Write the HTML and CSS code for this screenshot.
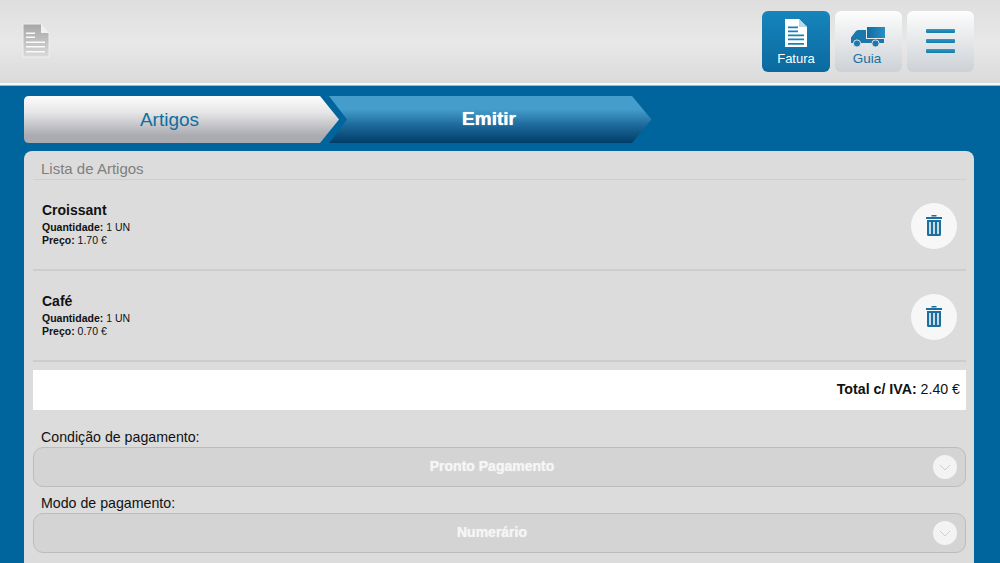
FILE: index.html
```html
<!DOCTYPE html>
<html lang="pt">
<head>
<meta charset="utf-8">
<title>Emitir</title>
<link rel="stylesheet" href="styles.css">
</head>
<body>
<header class="topbar">
  <svg class="logo" width="28" height="36" viewBox="0 0 28 36">
    <defs><linearGradient id="lg" x1="0" y1="0" x2="0" y2="1"><stop offset="0" stop-color="#a6a6a6"/><stop offset="1" stop-color="#dadada"/></linearGradient></defs>
    <path d="M1 1H19L27 10V34H1Z" fill="url(#lg)" stroke="#efefef" stroke-width="1"/>
    <path d="M19 1L27 10H19Z" fill="#f1f1f1"/>
    <path d="M4 9.500H13V11H4ZM4 13.500H13V15H4ZM4 18.500H23V20H4ZM4 23H23V24.500H4ZM4 28H23V29.500H4Z" fill="#fafafa"/>
  </svg>
  <nav class="actions">
    <button class="action active">
      <svg width="24" height="29" viewBox="0 0 24 29"><path d="M1 0H15L23 8V28H1Z" fill="#fff"/><path d="M15 0L23 8H15Z" fill="#bcd9ea"/><path d="M4 7.500H14V9.300H4ZM4 11.500H14V13.300H4ZM4 15.500H20V17.300H4ZM4 19.500H20V21.300H4ZM4 24H20V25.800H4Z" fill="#1a81b5"/></svg>
      <span>Fatura</span>
    </button>
    <button class="action guia">
      <svg width="37" height="21" viewBox="0 0 37 21"><defs><linearGradient id="tg" x1="0" y1="0" x2="1" y2="0"><stop offset="0" stop-color="#0f6da3"/><stop offset="1" stop-color="#2a8fc2"/></linearGradient></defs><path d="M18 0H36V11H18Z" fill="url(#tg)"/><path d="M2 16V10.500L7 4Q8 3 10 3H17V12H35V16Z" fill="#1a78ad"/><circle cx="8" cy="16.500" r="3.600" fill="#1a78ad" stroke="#dfe2e6" stroke-width="1"/><circle cx="26.500" cy="16.500" r="3.600" fill="#1a78ad" stroke="#dfe2e6" stroke-width="1"/></svg>
      <span class="dark">Guia</span>
    </button>
    <button class="action menu" aria-label="Menu">
      <i class="bar"></i><i class="bar"></i><i class="bar"></i>
    </button>
  </nav>
</header>
<main class="content">
  <div class="steps">
    <div class="step first">Artigos</div>
    <div class="step second">Emitir</div>
  </div>
  <section class="panel">
    <h2 class="title">Lista de Artigos</h2>
    <article class="item">
      <div class="info">
        <h3>Croissant</h3>
        <p><b>Quantidade:</b> 1 UN</p>
        <p><b>Preço:</b> 1.70 €</p>
      </div>
      <button class="trash" aria-label="Apagar"><svg width="16" height="21" viewBox="0 0 16 21"><path d="M5.500 0H10.500V1.500H5.500ZM0 2H16V4H0ZM1 5H15V19.500Q15 21 13.500 21H2.500Q1 21 1 19.500ZM3.200 7V19H4.800V7ZM7.200 7V19H8.800V7ZM11.200 7V19H12.800V7Z" fill="#1a6f9f" fill-rule="evenodd"/></svg></button>
    </article>
    <article class="item">
      <div class="info">
        <h3>Café</h3>
        <p><b>Quantidade:</b> 1 UN</p>
        <p><b>Preço:</b> 0.70 €</p>
      </div>
      <button class="trash" aria-label="Apagar"><svg width="16" height="21" viewBox="0 0 16 21"><path d="M5.500 0H10.500V1.500H5.500ZM0 2H16V4H0ZM1 5H15V19.500Q15 21 13.500 21H2.500Q1 21 1 19.500ZM3.200 7V19H4.800V7ZM7.200 7V19H8.800V7ZM11.200 7V19H12.800V7Z" fill="#1a6f9f" fill-rule="evenodd"/></svg></button>
    </article>
    <div class="total"><b>Total c/ IVA:</b> 2.40 €</div>
    <label class="label first-label">Condição de pagamento:</label>
    <div class="select">
      <span>Pronto Pagamento</span>
      <i class="chev"><svg width="12" height="7" viewBox="0 0 12 7"><path d="M1 1L6 6L11 1" fill="none" stroke="#d0d0d0" stroke-width="1"/></svg></i>
    </div>
    <label class="label">Modo de pagamento:</label>
    <div class="select">
      <span>Numerário</span>
      <i class="chev"><svg width="12" height="7" viewBox="0 0 12 7"><path d="M1 1L6 6L11 1" fill="none" stroke="#d0d0d0" stroke-width="1"/></svg></i>
    </div>
  </section>
</main>
</body>
</html>
```
FILE: styles.css
```css
* { box-sizing: border-box; }
html, body { margin: 0; height: 563px; overflow: hidden; }
body { background: #00659c; font-family: "Liberation Sans", Arial, sans-serif; color: #111; }
h2, h3, p { margin: 0; font-weight: normal; }
button { font-family: inherit; border: 0; padding: 0; }

.topbar {
  height: 86px;
  padding: 11px 26px 0 22px;
  display: flex;
  justify-content: space-between;
  align-items: flex-start;
  background: linear-gradient(#dedede, #e8e8e8 50%, #dadada);
  border-bottom: 1px solid #b4b4b4;
  box-shadow: inset 0 -2px 0 #f8f8f8;
}
.logo { margin-top: 12px; }
.actions { display: flex; gap: 5px; }
.action {
  width: 67px;
  height: 61px;
  border-radius: 6px;
  display: flex;
  flex-direction: column;
  align-items: center;
  justify-content: flex-end;
  gap: 3px;
  padding-bottom: 6px;
  background: linear-gradient(#fdfdfd, #cdd1d6);
  font-size: 13px;
  color: #fff;
}
.action.active { width: 68px; background: linear-gradient(#1685bb, #0a6a9f); }
.action.guia { padding-right: 3px; font-size: 13.500px; }
.action .dark { color: #16719f; }
.action.menu { justify-content: center; gap: 5.500px; padding: 0 0 1px; }
.bar { display: block; width: 29px; height: 4.500px; background: linear-gradient(#2f9cc8, #137aa8); border-radius: 1px; }

.content { padding: 10px 26px 0 24px; }
.steps { display: flex; height: 47px; }
.step {
  height: 47px;
  display: flex;
  align-items: center;
  justify-content: center;
  font-size: 19px;
}
.step.first {
  width: 315px;
  padding-right: 24px;
  color: #0f6f9f;
  background: linear-gradient(#fdfdfd, #e6e6e8 35%, #a9abb0 85%, #a9abb0);
  clip-path: path("M5 0H296L315 23.500L296 47H5Q0 47 0 42V5Q0 0 5 0Z");
}
.step.second {
  width: 324px;
  margin-left: -11px;
  padding: 0 2px 2px 0;
  color: #fff;
  font-weight: bold;
  text-shadow: 0 0 1px #fff;
  background: linear-gradient(#459dcb, #459dcb 28%, #1d6a9b 62%, #003d69);
  clip-path: path("M1 0H304L323.500 23.500L304 47H1L19 23.500Z");
}

.panel {
  margin-top: 8px;
  height: 420px;
  padding: 9px 8px 0 9px;
  background: #dcdcdc;
  border-radius: 8px 8px 0 0;
}
.title {
  height: 20px;
  padding-left: 8px;
  font-size: 15px;
  line-height: 18px;
  color: #7f7f7f;
  border-bottom: 1px solid #cfcfcf;
}
.item {
  height: 91px;
  padding: 0 9px;
  display: flex;
  align-items: center;
  justify-content: space-between;
  border-bottom: 2px solid #cdcdcd;
}
.item h3 { font-size: 14px; font-weight: bold; line-height: 18px; margin: -1px 0 2px; }
.item p { font-size: 10.500px; line-height: 13px; }
.trash {
  width: 46px;
  height: 46px;
  margin-top: 2px;
  border-radius: 50%;
  background: #f7f7f7;
  display: flex;
  align-items: center;
  justify-content: center;
}
.total {
  margin-top: 8px;
  height: 40px;
  padding-right: 6px;
  background: #fff;
  text-align: right;
  font-size: 14.200px;
  line-height: 38px;
}
.label { display: block; height: 16px; padding-left: 8px; font-size: 14.200px; line-height: 16px; }
.first-label { margin-top: 19px; margin-bottom: 2px; }
.select + .label { margin-top: 8px; margin-bottom: 2px; }
.select {
  position: relative;
  height: 40px;
  padding: 0 15px 2px 0;
  border: 1px solid #bcbcbc;
  border-radius: 10px;
  background: #d4d4d4;
  display: flex;
  align-items: center;
  justify-content: center;
  font-size: 14px;
  font-weight: bold;
  color: #f5f5f5;
  text-shadow: 0 0 1px #f5f5f5;
}
.chev {
  position: absolute;
  right: 8px;
  top: 7px;
  width: 24px;
  height: 24px;
  border-radius: 50%;
  background: #f3f3f3;
  display: flex;
  align-items: center;
  justify-content: center;
}
```
